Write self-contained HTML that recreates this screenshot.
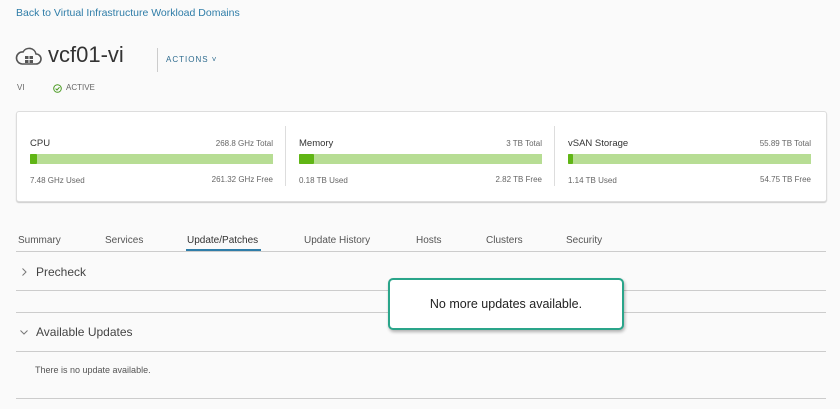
<!DOCTYPE html><html><head><style>
body{margin:0;width:840px;height:409px;background:#fafafa;font-family:"Liberation Sans",sans-serif;position:relative;overflow:hidden;color:#333}
.a{position:absolute;white-space:nowrap}
.card{position:absolute;left:16px;top:111px;width:809px;height:89px;background:#fff;border:1px solid #ddd;border-radius:3px;box-shadow:0 1px 1px #ccc}
.col{position:absolute;top:0;height:89px}
.sep{position:absolute;top:14px;width:1px;height:60px;background:#ddd}
.bar{position:absolute;top:42px;height:10px;background:#b7dd94}
.bar i{position:absolute;left:0;top:0;height:10px;background:#60b515;border-radius:1px}
.t{font-size:9.5px;color:#333}
.s{font-size:8px;color:#666}
.tab{position:absolute;top:235px;font-size:10px;color:#555}
.hl{position:absolute;left:16px;width:810px;height:1px;background:#ccc}
</style></head><body>
<div class="a" style="left:16px;top:7px;font-size:10.5px;color:#2f7da8">Back to Virtual Infrastructure Workload Domains</div>
<svg class="a" style="left:15px;top:44px" width="28" height="24" viewBox="0 0 28 24"><path d="M7 20 H21 A5 5 0 0 0 21 10 A7 7 0 0 0 8 8 A6 6 0 0 0 7 20" fill="none" stroke="#555" stroke-width="1.6"/><rect x="10" y="12" width="3.5" height="3" fill="#555"/><rect x="14.5" y="12" width="3.5" height="3" fill="#555"/><rect x="10" y="16" width="3.5" height="3" fill="#555"/><rect x="14.5" y="16" width="3.5" height="3" fill="#555"/></svg>
<div class="a" style="left:48px;top:42px;font-size:22px;color:#333">vcf01-vi</div>
<div class="a" style="left:157px;top:48px;width:1px;height:24px;background:#ccc"></div>
<div class="a" style="left:166px;top:55px;font-size:8px;letter-spacing:1px;color:#2f6c8f">ACTIONS ˅</div>
<div class="a" style="left:17px;top:83px;font-size:8px;color:#666">VI</div>
<svg class="a" style="left:53px;top:84px" width="9" height="9" viewBox="0 0 9 9"><circle cx="4.5" cy="4.5" r="3.8" fill="none" stroke="#4a9a22" stroke-width="1"/><path d="M2.6 4.6 L4 6 L6.5 3.2" fill="none" stroke="#4a9a22" stroke-width="1"/></svg>
<div class="a" style="left:66px;top:83px;font-size:8px;color:#666">ACTIVE</div>
<div class="card">
<div class="col" style="left:13px;width:243px"><div class="a t" style="left:0;top:26px">CPU</div><div class="a s" style="right:0;top:27px">268.8 GHz Total</div><div class="bar" style="left:0;width:243px"><i style="width:7px"></i></div><div class="a s" style="left:0;top:64px">7.48 GHz Used</div><div class="a s" style="right:0;top:63px">261.32 GHz Free</div></div>
<div class="sep" style="left:268px"></div>
<div class="col" style="left:282px;width:243px"><div class="a t" style="left:0;top:26px">Memory</div><div class="a s" style="right:0;top:27px">3 TB Total</div><div class="bar" style="left:0;width:243px"><i style="width:15px"></i></div><div class="a s" style="left:0;top:64px">0.18 TB Used</div><div class="a s" style="right:0;top:63px">2.82 TB Free</div></div>
<div class="sep" style="left:537px"></div>
<div class="col" style="left:551px;width:243px"><div class="a t" style="left:0;top:26px">vSAN Storage</div><div class="a s" style="right:0;top:27px">55.89 TB Total</div><div class="bar" style="left:0;width:243px"><i style="width:5px"></i></div><div class="a s" style="left:0;top:64px">1.14 TB Used</div><div class="a s" style="right:0;top:63px">54.75 TB Free</div></div>
</div>
<div class="tab" style="left:18px">Summary</div>
<div class="tab" style="left:105px">Services</div>
<div class="tab" style="left:187px;color:#333">Update/Patches</div>
<div class="a" style="left:186px;top:249px;width:75px;height:2px;background:#2f7da8"></div>
<div class="tab" style="left:304px">Update History</div>
<div class="tab" style="left:416px">Hosts</div>
<div class="tab" style="left:486px">Clusters</div>
<div class="tab" style="left:566px">Security</div>
<div class="hl" style="top:251px"></div>
<svg class="a" style="left:20px;top:267px" width="8" height="10" viewBox="0 0 8 10"><path d="M2.5 1.5 L6 5 L2.5 8.5" fill="none" stroke="#777" stroke-width="1"/></svg>
<div class="a" style="left:36px;top:265px;font-size:12px;color:#444">Precheck</div>
<div class="hl" style="top:290px"></div>
<div class="hl" style="top:312px"></div>
<svg class="a" style="left:19px;top:328px" width="10" height="8" viewBox="0 0 10 8"><path d="M1.5 2.5 L5 6 L8.5 2.5" fill="none" stroke="#777" stroke-width="1"/></svg>
<div class="a" style="left:36px;top:325px;font-size:12px;color:#444">Available Updates</div>
<div class="hl" style="top:351px"></div>
<div class="a" style="left:35px;top:365px;font-size:9px;color:#555">There is no update available.</div>
<div class="hl" style="top:398px"></div>
<div class="a" style="left:388px;top:278px;width:232px;height:48px;background:#fff;border:2px solid #2aa58a;border-radius:5px;box-shadow:1px 2px 3px rgba(0,0,0,.3)"><div style="text-align:center;margin-top:17px;font-size:12.5px;color:#222">No more updates available.</div></div>
</body></html>
